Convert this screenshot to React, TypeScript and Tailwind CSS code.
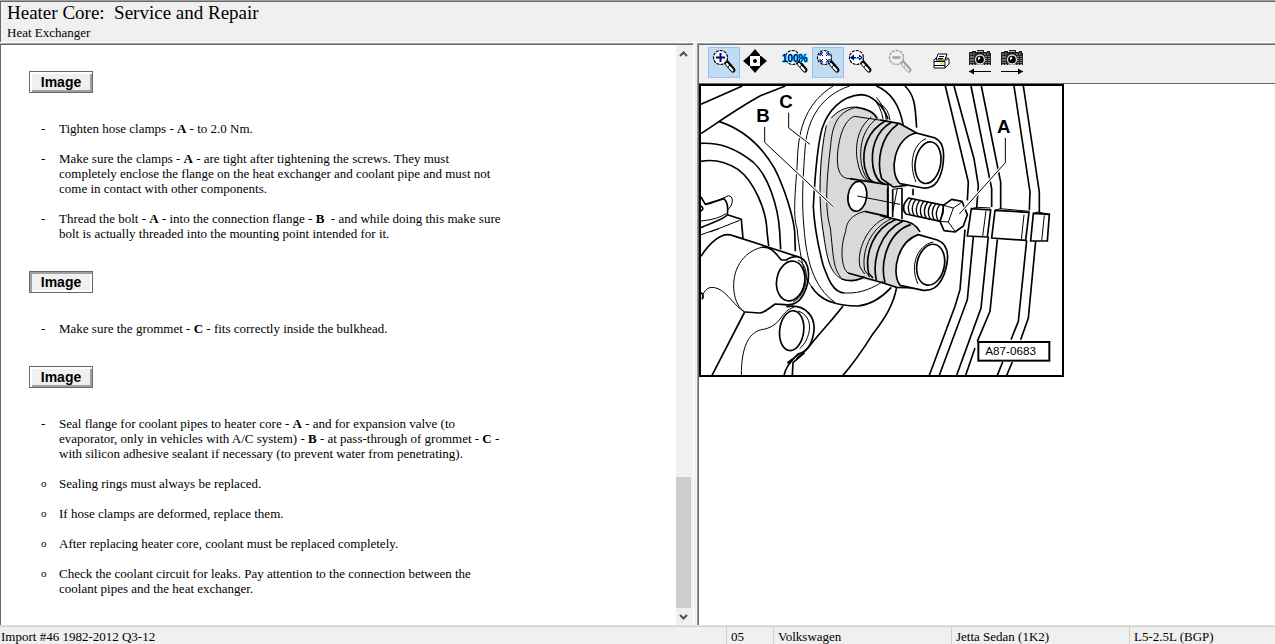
import type { ReactNode } from "react";
import clsx from "clsx";

const statusItems = ["Import #46 1982-2012 Q3-12", "05", "Volkswagen", "Jetta Sedan (1K2)", "L5-2.5L (BGP)"];

function Magnifier({ children, muted = false }: { children?: ReactNode; muted?: boolean }) {
  const ink = muted ? "#a0a0a0" : "#000";
  return (
    <svg width="32" height="31" viewBox="0 0 32 31" aria-hidden="true">
      <path d="M18 15l7 8" stroke={ink} strokeWidth="5" strokeLinecap="round" />
      <path d="M17 15l8 9" stroke={muted ? "#f0f0f0" : "#fff"} strokeWidth="2" />
      <path d="M20 20l3-3M17 17l2-2" stroke={ink} strokeWidth="1" />
      <circle cx="12.5" cy="10.5" r="7" fill={muted ? "#f0f0f0" : "#fff"} fillOpacity="0.9" stroke={ink} strokeDasharray="3 1" strokeWidth={muted ? 1.4 : 1.2} />
      {children}
    </svg>
  );
}

function PanIcon() {
  return (
    <svg width="32" height="31" viewBox="0 0 32 31" aria-hidden="true">
      <path d="M9 8h12v12H9z" fill="#fff" />
      <path d="M15 2l6 7H9zM15 26l6-7H9zM3 14l7-6v12zM27 14l-7-6v12z" fill="#000" />
      <circle cx="15" cy="14" r="2" fill="#000" />
    </svg>
  );
}

function PrinterIcon() {
  return (
    <svg width="32" height="31" viewBox="0 0 32 31" aria-hidden="true">
      <path d="M10 13l2-2h11l2 1v5l-4 4H10z" fill="#fff" stroke="#000" />
      <path d="M12 13l2-6h9l-2 6z" fill="#fff" stroke="#000" />
      <path d="M15 9.500h5M14 11.500h5M10 14.500h11l3-3M21 15v6" stroke="#000" fill="none" />
      <path d="M10 18.500h11" stroke="#000" />
      <path d="M16 16.500h4" stroke="#e8e800" strokeWidth="2" />
    </svg>
  );
}

function CameraIcon({ back = false }: { back?: boolean }) {
  return (
    <svg width="32" height="31" viewBox="0 0 32 31" aria-hidden="true">
      <path d="M5 5h3V4h4v1h1V3h7v2h3V4h3v2h1v12H5z" fill="#222" />
      <path d="M6 7h6M20 7h6M6 17.500h20" stroke="#999" strokeDasharray="2 1" />
      <path d="M13 4.500h6" stroke="#aaa" />
      <path d="M7 9v7M9 9v7" stroke="#bbb" strokeDasharray="2 1" />
      <path d="M22 9v7M25 9v7" stroke="#ddd" strokeDasharray="1 1" />
      <circle cx="16" cy="12.500" r="4.500" fill="#000" stroke="#ddd" strokeWidth="1.300" />
      <path d="M14 10.500l2-1v2l-2 2z" fill="#fff" />
      <path d="M5 24.500h22" stroke="#000" />
      <path d={back ? "M5 24.500l5-3v6z" : "M27 24.500l-5-3v6z"} fill="#000" />
    </svg>
  );
}

function ToolButton({ label, active, disabled, children }: { label: string; active?: boolean; disabled?: boolean; children: ReactNode }) {
  return (
    <button
      type="button"
      aria-label={label}
      aria-pressed={active}
      disabled={disabled}
      className={clsx(
        "flex h-[31px] w-8 shrink-0 items-center justify-center border",
        active ? "border-[#92c5f2] bg-[#bfdcf2]" : "border-transparent",
      )}
    >
      <span className="-m-px block shrink-0">{children}</span>
    </button>
  );
}

function Toolbar() {
  return (
    <div className="flex h-[38px] shrink-0 items-start gap-2 overflow-hidden bg-[#f0f0f0] pt-0.5 pl-[9px]">
      <div className="flex">
        <ToolButton label="Zoom in" active>
          <Magnifier>
            <path d="M8 10.500h9M12.500 6v9" stroke="#000080" strokeWidth="2" />
          </Magnifier>
        </ToolButton>
        <ToolButton label="Pan">
          <PanIcon />
        </ToolButton>
      </div>
      <div className="flex">
        <ToolButton label="Actual size">
          <Magnifier>
            <text
              x="2"
              y="15"
              fill="#000080"
              stroke="#00e5ff"
              paintOrder="stroke"
              className="font-['Liberation_Sans_Narrow','Liberation_Sans',sans-serif] text-[10px] font-bold"
            >
              100%
            </text>
          </Magnifier>
        </ToolButton>
        <ToolButton label="Fit to window" active>
          <Magnifier>
            <path d="M8 9V6h3M14 6h3v3M17 12v3h-3M11 15H8v-3" fill="none" stroke="#8be9ff" strokeWidth="2" />
            <path d="M8 9V6h3M14 6h3v3M17 12v3h-3M11 15H8v-3M8 6l3 3M17 6l-3 3M17 15l-3-3M8 15l3-3" fill="none" stroke="#000080" />
          </Magnifier>
        </ToolButton>
        <ToolButton label="Fit to width">
          <Magnifier>
            <path d="M7 11.500h11" stroke="#00e5ff" />
            <path d="M6 10.500l4-3v6zM19 10.500l-4-3v6zM8 10h4v1H8zM13 10h4v1h-4z" fill="#000080" />
          </Magnifier>
        </ToolButton>
      </div>
      <ToolButton label="Zoom out" disabled>
        <Magnifier muted>
          <path d="M8.500 10.500h8" stroke="#a0a0a0" strokeWidth="2.500" />
        </Magnifier>
      </ToolButton>
      <ToolButton label="Print">
        <PrinterIcon />
      </ToolButton>
      <div className="flex">
        <ToolButton label="Previous image">
          <CameraIcon back />
        </ToolButton>
        <ToolButton label="Next image">
          <CameraIcon />
        </ToolButton>
      </div>
    </div>
  );
}

// Drawn at three units per pixel so the fine contours stay on whole numbers.
function HeatExchangerDrawing() {
  return (
    <svg width="365" height="293" viewBox="3 6 1095 879" role="img" aria-label="Heat exchanger connection flange" className="block">
      <rect x="6" y="9" width="1089" height="873" fill="#fff" />
      <g fill="none" stroke="#000" strokeWidth="5" strokeLinejoin="round">
        {/* housing, upper left */}
        <path d="M9 67L133 12M9 155C55 125 120 78 190 40L262 12" />
        <path d="M62 118C130 140 190 190 230 260C260 320 285 400 290 448L292 508" />
        <path d="M9 184C70 182 115 200 165 240C210 280 240 370 245 448L248 502" />
        <path d="M9 238C50 230 85 240 120 262C165 295 205 380 207 448L212 492" />
        <path d="M9 345L22 367L78 350M9 372Q20 379 9 387M78 350Q93 365 88 398C80 412 40 422 9 437M88 398L130 412L135 470" />
        <path d="M22 367L40 364L92 341Q110 345 99 372L88 385M9 417Q60 412 84 395M36 450L125 415M9 458L62 440" strokeWidth="3" />

        {/* left hoses */}
        <path d="M9 523C30 490 68 448 102 460L305 526C340 540 336 598 318 634C302 666 282 670 260 668L232 666C215 676 202 692 185 693L140 690" />
        <path d="M190 496C220 493 232 513 250 534L265 534Q278 524 296 524M9 632Q20 640 12 652" />
        <path d="M190 496C120 515 98 585 110 640C115 668 130 683 140 690M12 643C25 613 40 613 60 620C90 633 110 673 140 690" strokeWidth="3" />
        <ellipse cx="278" cy="597" rx="42" ry="60" transform="rotate(10 278 597)" />
        <path d="M300 534C340 552 330 640 285 660" strokeWidth="3" />
        <path d="M140 690L42 880M265 674C325 664 357 708 346 758C340 790 325 810 300 816C280 838 265 850 258 880M283 880L285 842L320 812M268 843L305 815" />
        <ellipse cx="281" cy="746" rx="36" ry="60" transform="rotate(7 281 746)" />
        <path d="M300 687C355 705 335 775 305 800M288 676C270 680 258 695 250 706C235 728 215 740 190 743C150 753 130 798 130 880" strokeWidth="3" />
        <path d="M435 672C400 718 360 758 330 798L295 832M596 616C586 668 562 708 525 755C500 795 470 840 435 880" />

        {/* grommet rings */}
        <path d="M405 12C330 60 300 130 298 240C292 330 284 400 297 438C305 518 320 588 340 613C360 645 385 660 410 662M455 12C370 40 330 110 322 190C315 280 310 360 318 438C325 530 345 615 410 660" strokeWidth="3" />
        <path d="M340 613C370 662 430 672 480 672C520 668 550 648 580 616" />
        <path d="M535 12Q600 38 616 132M621 12C655 45 651 85 656 137" />
        <path d="M546 65Q572 80 576 115M520 45Q550 70 556 116M535 46Q563 78 565 116" strokeWidth="3" />

        {/* connection flange */}
        <path
          d="M385 130C400 90 440 70 480 76L525 88L550 112L606 122L655 153C600 165 580 250 600 312L568 306V405L606 415Q650 420 664 455C600 475 578 555 606 614L546 602L490 592C450 605 415 580 395 555C370 470 355 350 368 230Q372 165 385 130Z"
          fill="#d9d9d9"
          stroke="none"
        />
        <path d="M570 112C555 65 515 38 490 38C430 42 390 85 372 140C354 210 350 300 346 375C349 430 360 490 375 548C390 590 405 632 440 633" />
        <path d="M440 633C490 636 530 615 555 598M385 130C365 220 360 350 374 438C384 500 388 570 430 590M475 76C410 90 402 145 398 190C385 300 380 380 397 438C406 520 405 560 430 588M400 108C420 84 450 72 480 76" strokeWidth="3" />
        <path d="M475 76Q525 82 537 110M430 590Q465 604 500 584M455 290L570 308V404L500 388" />
        <path d="M570 118L470 103C438 112 420 170 418 230C418 270 430 290 455 290M500 388C455 400 445 425 443 448C425 500 430 558 450 573" strokeWidth="3" />

        {/* upper pipe collar */}
        <path d="M520 105C480 135 470 190 478 235Q486 285 510 298M536 110C490 145 484 200 490 245Q498 290 520 300" strokeWidth="3" />
        <path d="M546 114L606 125L656 153M563 116C510 145 490 200 500 255Q510 298 530 302M580 121C530 150 518 205 525 255Q534 300 560 306M600 126C545 165 536 240 551 290L586 315L626 310" />

        {/* lower pipe collar */}
        <path d="M568 405C505 430 475 510 486 555L500 576M580 410C515 440 490 510 500 565L515 585" strokeWidth="3" />
        <path d="M450 573L546 600L596 616L656 618M546 400L606 415Q650 418 666 450M592 413C525 440 500 515 512 575L525 588M614 418C545 450 522 535 535 594M638 428C570 450 545 540 561 602" />
      </g>

      <g fill="#fff" stroke="#000" strokeWidth="5" strokeLinejoin="round">
        <ellipse cx="478" cy="343" rx="28" ry="45" transform="rotate(8 478 343)" />
        {/* pipe ends */}
        <path d="M655 153L696 164C738 170 742 210 733 260C722 305 705 320 676 318L606 305C570 270 590 165 655 153Z" />
        <ellipse cx="690" cy="242" rx="38" ry="63" transform="rotate(10 690 242)" />
        <path d="M661 458L718 474C755 488 755 528 738 578C720 620 700 626 676 625L606 610C578 570 600 478 661 458Z" />
        <ellipse cx="698" cy="548" rx="41" ry="62" transform="rotate(12 698 548)" />
        <path d="M684 170C646 185 630 245 654 300M706 480C655 490 635 555 660 606" fill="none" strokeWidth="3" />
        <path d="M569 318V402M584 322V405M612 318V412M645 320V340" fill="none" />
        <path d="M584 322L612 318M598 320L584 390M478 342L606 367" fill="none" strokeWidth="3" />

        {/* bolt */}
        <path d="M632 348L738 370L728 418L624 396Q605 375 632 348Z" />
        <path d="M641 350Q623 374 637 399M653 352Q635 377 649 402M665 355Q647 380 661 405M677 358Q659 382 673 407M689 360Q671 385 685 410M701 363Q683 387 697 412M713 365Q695 390 709 415M725 368Q707 392 721 418" fill="none" strokeWidth="4" />
        <path d="M736 370L761 352L792 358L808 398L796 432L771 450L738 446L726 418L735 392Z" />
        <path d="M736 370L766 378L792 360M766 378L751 420L726 418M751 420L771 448" fill="none" strokeWidth="3" />
      </g>

      {/* body panel seams, right */}
      <g fill="none" stroke="#000" strokeWidth="5">
        <path d="M742 12L811 300L808 355M768 12L828 230L841 310L836 378M819 12L881 320V375M850 12L908 300V382M948 12L996 330L994 385M976 12L1024 330V392" />
        <path d="M801 443L786 623L771 673L694 880M826 465L808 653L724 880M871 464L849 678L776 880M898 472L876 688L838 778M831 798L803 880M986 475L961 718L939 773M914 840L898 880M1013 477L991 708L968 773M943 840L926 880" />
        <g fill="#fff">
          <path d="M820 380L878 384L868 465L808 462Z" />
          <path d="M891 385L993 391L983 475L881 468Z" />
          <path d="M1006 394L1054 397L1048 477L998 477Z" />
        </g>
        <path d="M864 386L854 463M978 398L970 474M1039 400L1031 476M820 380L838 376L878 378M891 385L907 380L994 388M1006 394L1020 390L1054 397" strokeWidth="3" />
      </g>

      {/* callouts */}
      <g fill="none">
        <path d="M272 92V138L336 187M200 135V181L406 374M922 168V242L784 396" stroke="#fff" strokeWidth="9" />
        <path d="M272 92V138L336 187M200 135V181L406 374M922 168V242L784 396" stroke="#000" strokeWidth="3" />
      </g>
      <g className="font-['Liberation_Sans',Arial,sans-serif] text-[56px] font-bold">
        <text x="175" y="121">B</text>
        <text x="244" y="78">C</text>
        <text x="897" y="153">A</text>
      </g>
      <rect x="841" y="780" width="213" height="56" fill="#fff" stroke="#000" strokeWidth="6" />
      <text x="862" y="820" className="font-['Liberation_Sans',Arial,sans-serif] text-[35px]">A87-0683</text>
      <rect x="6" y="9" width="1089" height="873" fill="none" stroke="#000" strokeWidth="6" />
    </svg>
  );
}

function ImageButton({ pressed = false }: { pressed?: boolean }) {
  return (
    <button
      type="button"
      aria-pressed={pressed}
      className={clsx(
        "mt-[30px] mb-7 ml-7 block h-[22px] w-16 border border-[#696969] bg-[#f0f0f0] font-['Liberation_Sans',Arial,sans-serif] text-[14px] leading-[18px] font-bold",
        pressed
          ? "shadow-[inset_2px_2px_0_#a0a0a0,inset_-2px_-2px_0_#fff]"
          : "shadow-[inset_2px_2px_0_#fff,inset_-2px_-2px_0_#a0a0a0]",
      )}
    >
      Image
    </button>
  );
}

function Step({ mark = "-", children }: { mark?: string; children: ReactNode }) {
  return (
    <li className="flex">
      <span className={clsx("w-[18px] shrink-0", mark === "o" && "text-[11px]")}>{mark}</span>
      <span className="max-w-[450px]">{children}</span>
    </li>
  );
}

function Steps({ children }: { children: ReactNode }) {
  return <ul className="flex flex-col gap-[15px] pl-10">{children}</ul>;
}

function Chevron({ up = false }: { up?: boolean }) {
  return (
    <svg width="9" height="6" viewBox="0 0 9 6" aria-hidden="true">
      <path d={up ? "M1 5l3.500-3.500L8 5" : "M1 1l3.500 3.500L8 1"} fill="none" stroke="#505050" strokeWidth="2" />
    </svg>
  );
}

function Scrollbar() {
  return (
    <div className="flex w-[17px] shrink-0 flex-col bg-[#f0f0f0] pr-0.5">
      <button type="button" aria-label="Scroll up" className="flex h-[17px] shrink-0 items-center justify-center">
        <Chevron up />
      </button>
      <div className="flex flex-1 flex-col justify-end">
        <div className="h-[24%] bg-[#cdcdcd]" />
      </div>
      <button type="button" aria-label="Scroll down" className="flex h-[17px] shrink-0 items-center justify-center">
        <Chevron />
      </button>
    </div>
  );
}

function Article() {
  return (
    <section className="flex min-h-0 border-t border-r border-t-[#a0a0a0] border-r-white">
      <div className="flex min-w-0 flex-1 border-t border-l border-[#696969]">
        <div className="min-w-0 flex-1 overflow-hidden bg-white pt-[26px] [&>button:first-child]:mt-0">
          <ImageButton />
          <Steps>
            <Step>
              Tighten hose clamps - <b>A</b> - to 2.0 Nm.
            </Step>
            <Step>
              Make sure the clamps - <b>A</b> - are tight after tightening the screws. They must completely enclose the
              flange on the heat exchanger and coolant pipe and must not come in contact with other components.
            </Step>
            <Step>
              Thread the bolt - <b>A</b> - into the connection flange - <b>B</b>&nbsp; - and while doing this make sure
              bolt is actually threaded into the mounting point intended for it.
            </Step>
          </Steps>
          <ImageButton pressed />
          <Steps>
            <Step>
              Make sure the grommet - <b>C</b> - fits correctly inside the bulkhead.
            </Step>
          </Steps>
          <ImageButton />
          <Steps>
            <Step>
              Seal flange for coolant pipes to heater core - <b>A</b> - and for expansion valve (to evaporator, only in
              vehicles with A/C system) - <b>B</b> - at pass-through of grommet - <b>C</b> - with silicon adhesive
              sealant if necessary (to prevent water from penetrating).
            </Step>
            <Step mark="o">Sealing rings must always be replaced.</Step>
            <Step mark="o">If hose clamps are deformed, replace them.</Step>
            <Step mark="o">After replacing heater core, coolant must be replaced completely.</Step>
            <Step mark="o">
              Check the coolant circuit for leaks. Pay attention to the connection between the coolant pipes and the
              heat exchanger.
            </Step>
          </Steps>
        </div>
        <Scrollbar />
      </div>
    </section>
  );
}

export default function App() {
  return (
    <div className="flex h-screen flex-col overflow-hidden bg-[#f0f0f0] font-['Liberation_Serif','Times_New_Roman',serif] text-[13px] leading-[15px] text-black">
      <header className="h-[43px] shrink-0 border-t border-b border-t-[#a0a0a0] border-b-white">
        <div className="h-full border-t border-l border-[#696969] pl-1.5">
          <h1 className="text-[19px] leading-[22px] whitespace-pre">Heater Core:  Service and Repair</h1>
          <h2 className="text-[13px] leading-[17px]">Heat Exchanger</h2>
        </div>
      </header>
      <main className="grid min-h-0 flex-1 grid-cols-[694fr_578fr] gap-[3px]">
        <Article />
        <section className="flex min-h-0 border-t border-l border-[#a0a0a0]">
          <div className="flex min-w-0 flex-1 flex-col border-t border-l border-[#696969]">
            <Toolbar />
            <div className="min-h-0 flex-1 overflow-hidden border-t border-[#696969] bg-white">
              <HeatExchangerDrawing />
            </div>
          </div>
        </section>
      </main>
      <footer className="grid h-[19px] shrink-0 grid-cols-[726fr_47fr_178fr_178fr_146fr] border-t border-[#e3e3e3]">
        {statusItems.map((item, i) => (
          <span
            key={item}
            className={clsx(
              "border-t border-t-[#d0d0d0] pt-0.5 whitespace-nowrap",
              i === 0 ? "pl-px" : "border-l border-l-[#d0d0d0] pl-1",
            )}
          >
            {item}
          </span>
        ))}
      </footer>
    </div>
  );
}
